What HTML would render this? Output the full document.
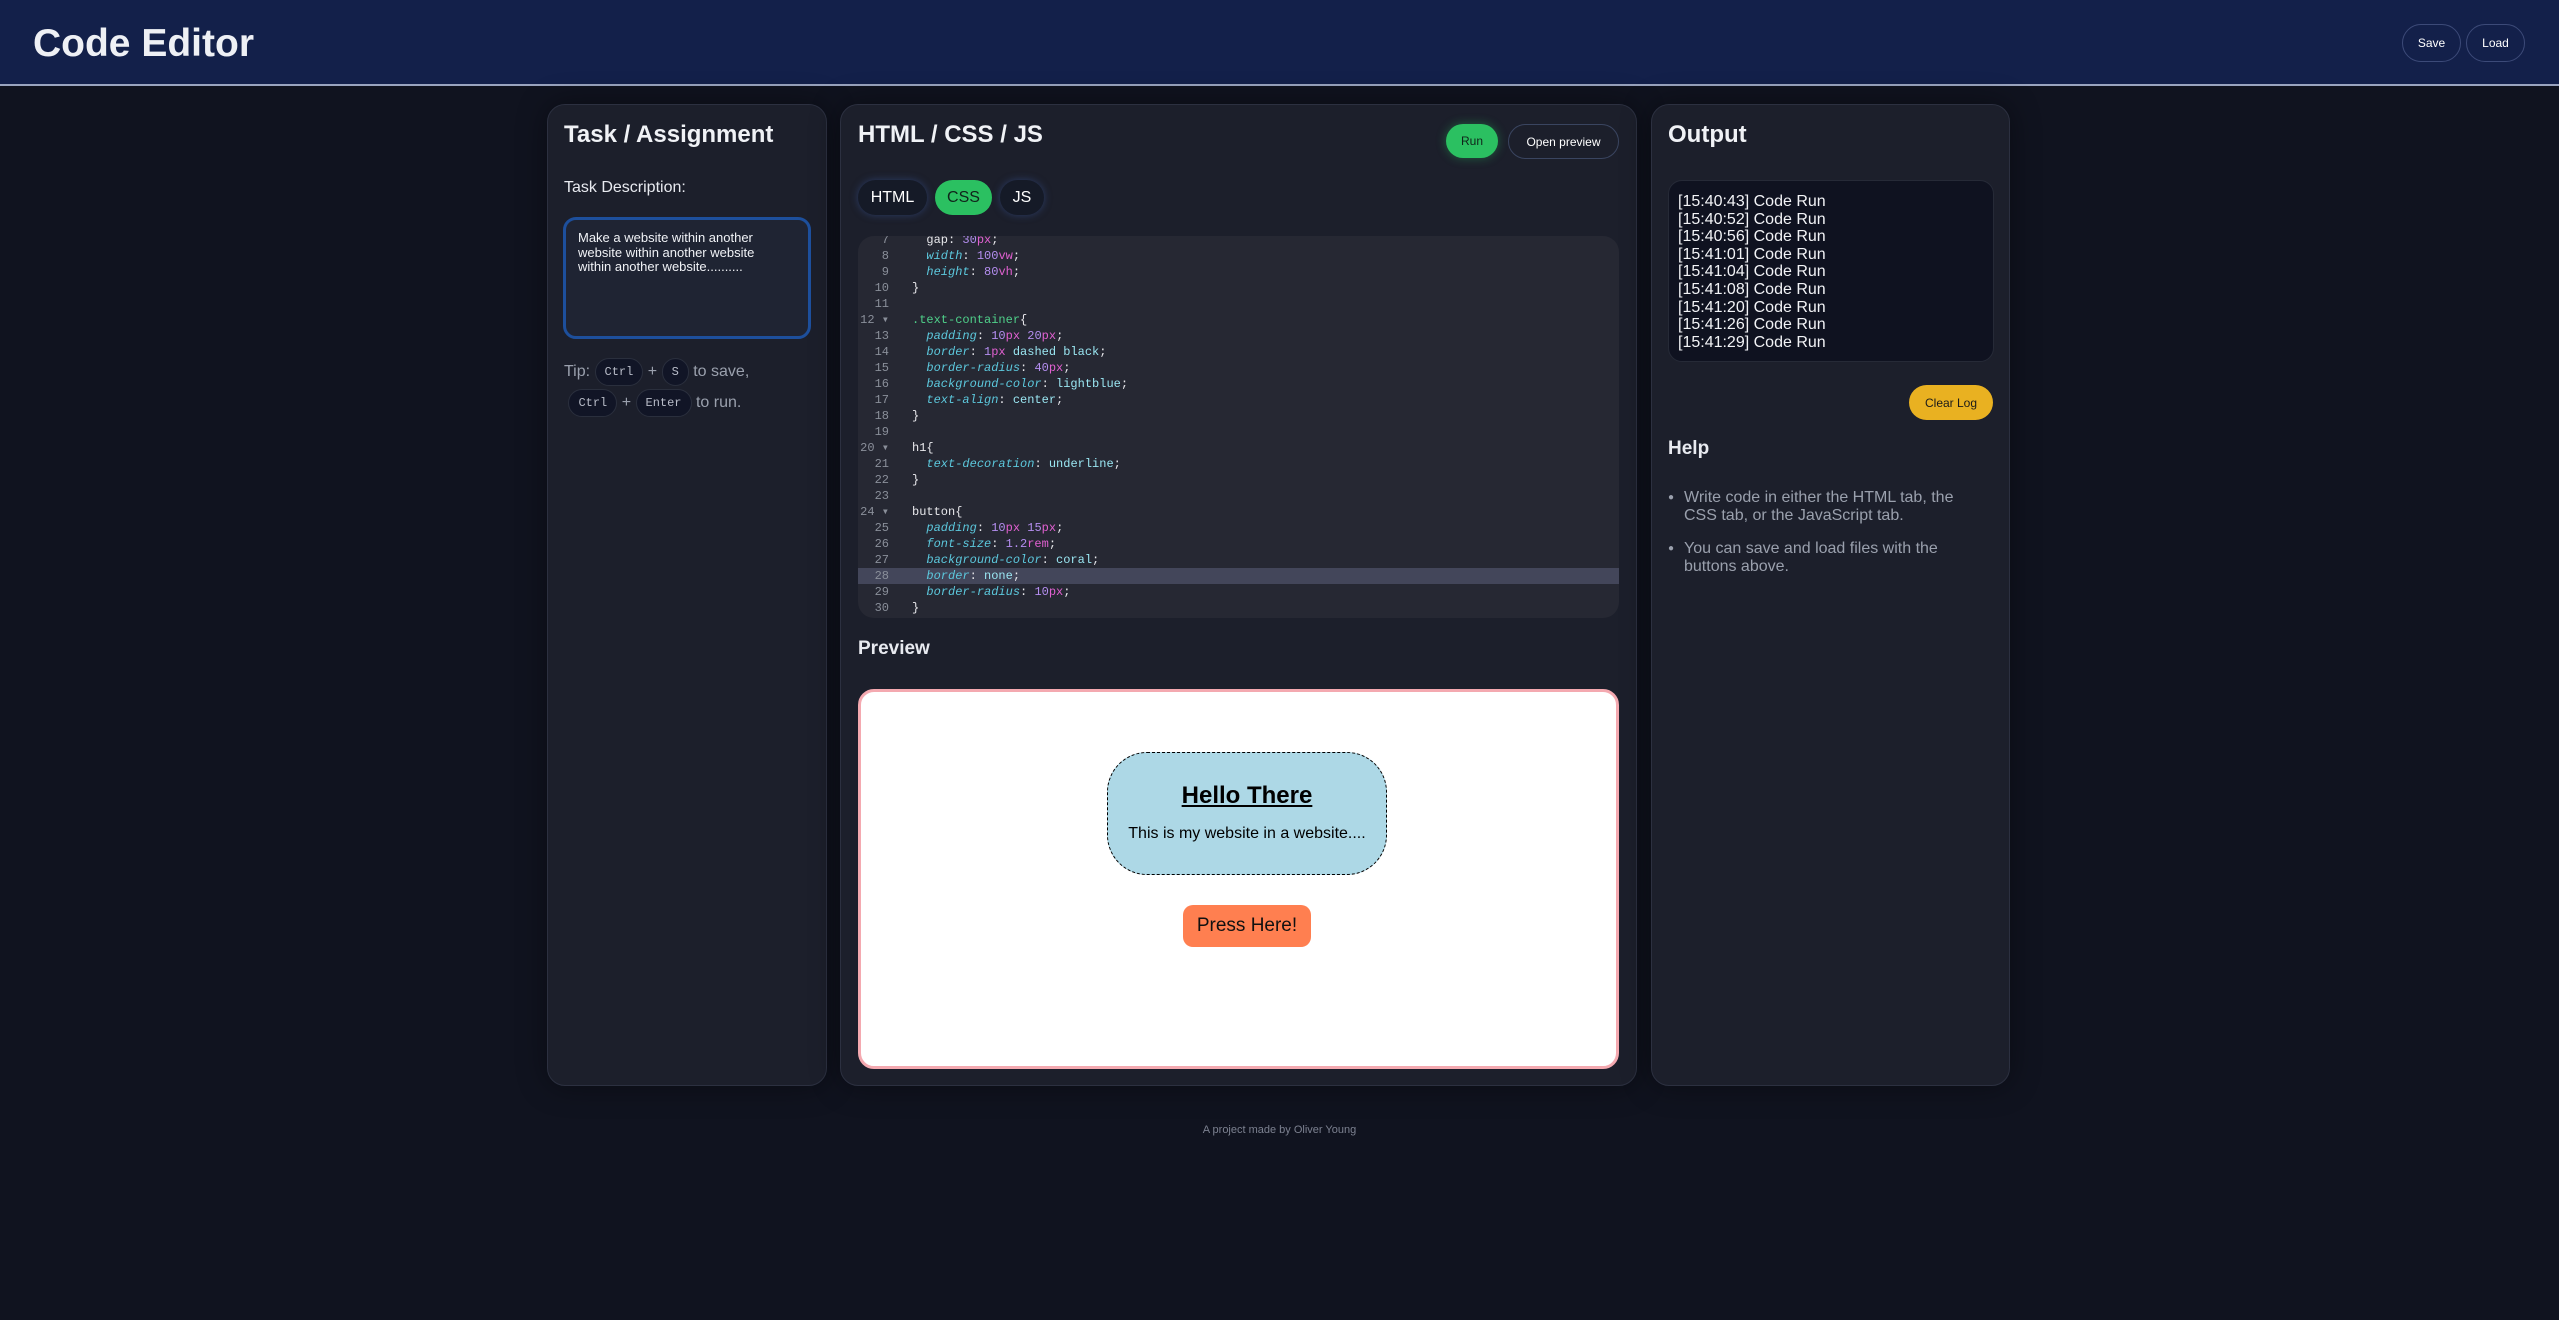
<!DOCTYPE html>
<html><head><meta charset="utf-8">
<style>
*{box-sizing:border-box;margin:0;padding:0}
body{width:2559px;height:1320px;background:#10131f;font-family:"Liberation Sans",sans-serif;color:#e8eaf0;position:relative;overflow:hidden}
.a{position:absolute}
.hdr{left:0;top:0;width:2559px;height:86px;background:#13204a;border-bottom:2px solid #9aa4bf}
.hdr h1{position:absolute;left:33px;top:22px;font-size:39px;font-weight:bold;color:#eef0f5}
.hb{position:absolute;top:24px;height:38px;border:1px solid #3c4a78;border-radius:19px;font-size:12px;color:#fff;display:flex;align-items:center;justify-content:center}
.panel{position:absolute;top:104px;height:982px;background:#1c1f2b;border:1px solid #2c3040;border-radius:18px;box-shadow:0 0 30px rgba(0,0,0,.4)}
.t{position:absolute;font-size:24px;font-weight:bold;color:#f0f2f6}
.pill{position:absolute;border-radius:20px;display:flex;align-items:center;justify-content:center}
.kbd{display:inline-block;background:#111526;border:1px solid #2a2f3d;border-radius:14px;font-family:"Liberation Mono",monospace;font-size:12px;line-height:14px;color:#b8bcc8;padding:6px 9px;vertical-align:middle}
.code{position:absolute;left:858px;top:236px;width:761px;height:382px;background:#262833;border-radius:16px;overflow:hidden;font-family:"Liberation Mono",monospace;font-size:12px}
.ln{position:absolute;left:0;width:761px;height:16px;line-height:16px;color:#e8e8ec;white-space:pre}
.ln .n{position:absolute;right:730px;color:#8a8f9a;text-align:right}
.ln .c{position:absolute;left:54px}
.p{color:#5cc8dd;font-style:italic}.v{color:#b48ef0}.u{color:#e060d0}.s{color:#4fd08a}.k{color:#9ae6f2}
.log{position:absolute;left:1668px;top:180px;width:326px;height:182px;background:#0f1220;border:1px solid #262a37;border-radius:14px;padding:12px 9px;font-size:16px;line-height:17.6px;color:#f2f3f6}
li{margin-bottom:15px}
</style></head><body>
<div class="a hdr"><h1>Code Editor</h1>
<div class="hb" style="left:2402px;width:59px">Save</div>
<div class="hb" style="left:2466px;width:59px">Load</div></div>

<div class="panel" style="left:547px;width:280px"></div>
<div class="panel" style="left:840px;width:797px"></div>
<div class="panel" style="left:1651px;width:359px"></div>

<!-- left -->
<div class="t" style="left:564px;top:121px">Task / Assignment</div>
<div class="a" style="left:564px;top:179px;font-size:16px">Task Description:</div>
<div class="a" style="left:563px;top:217px;width:248px;height:122px;border:3px solid #1d4f9c;border-radius:13px;background:#1f2433;padding:11px 34px 11px 12px;font-size:13px;line-height:14.5px;color:#f0f2f6">Make a website within another website within another website within another website..........</div>
<div class="a" style="left:564px;top:356px;font-size:16px;color:#9aa0ad;line-height:31px;width:250px">Tip: <span class="kbd">Ctrl</span> + <span class="kbd">S</span> to save,<br>&nbsp;<span class="kbd">Ctrl</span> + <span class="kbd">Enter</span> to run.</div>

<!-- middle -->
<div class="t" style="left:858px;top:121px">HTML / CSS / JS</div>
<div class="pill" style="left:1446px;top:124px;width:52px;height:34px;background:#2bc061;color:#10231a;font-size:12px;box-shadow:0 0 10px rgba(43,192,97,.4)">Run</div>
<div class="pill" style="left:1508px;top:124px;width:111px;height:35px;border:1px solid #3a4560;color:#fff;font-size:12px">Open preview</div>
<div class="pill" style="left:858px;top:180px;width:69px;height:35px;background:#151a27;color:#fff;font-size:16px;box-shadow:0 0 8px rgba(60,90,160,.5)">HTML</div>
<div class="pill" style="left:935px;top:180px;width:57px;height:35px;background:#2bc061;color:#10231a;font-size:16px">CSS</div>
<div class="pill" style="left:1000px;top:180px;width:44px;height:35px;background:#151a27;color:#fff;font-size:16px;box-shadow:0 0 8px rgba(60,90,160,.5)">JS</div>

<div class="code">
<div class="ln" style="top:-4px"><span class="n">7</span><span class="c">  gap: <span class="v">30</span><span class="u">px</span>;</span></div>
<div class="ln" style="top:12px"><span class="n">8</span><span class="c">  <span class="p">width</span>: <span class="v">100</span><span class="u">vw</span>;</span></div>
<div class="ln" style="top:28px"><span class="n">9</span><span class="c">  <span class="p">height</span>: <span class="v">80</span><span class="u">vh</span>;</span></div>
<div class="ln" style="top:44px"><span class="n">10</span><span class="c">}</span></div>
<div class="ln" style="top:60px"><span class="n">11</span></div>
<div class="ln" style="top:76px"><span class="n">12 ▾</span><span class="c"><span class="s">.text-container</span>{</span></div>
<div class="ln" style="top:92px"><span class="n">13</span><span class="c">  <span class="p">padding</span>: <span class="v">10</span><span class="u">px</span> <span class="v">20</span><span class="u">px</span>;</span></div>
<div class="ln" style="top:108px"><span class="n">14</span><span class="c">  <span class="p">border</span>: <span class="v">1</span><span class="u">px</span> <span class="k">dashed black</span>;</span></div>
<div class="ln" style="top:124px"><span class="n">15</span><span class="c">  <span class="p">border-radius</span>: <span class="v">40</span><span class="u">px</span>;</span></div>
<div class="ln" style="top:140px"><span class="n">16</span><span class="c">  <span class="p">background-color</span>: <span class="k">lightblue</span>;</span></div>
<div class="ln" style="top:156px"><span class="n">17</span><span class="c">  <span class="p">text-align</span>: <span class="k">center</span>;</span></div>
<div class="ln" style="top:172px"><span class="n">18</span><span class="c">}</span></div>
<div class="ln" style="top:188px"><span class="n">19</span></div>
<div class="ln" style="top:204px"><span class="n">20 ▾</span><span class="c">h1{</span></div>
<div class="ln" style="top:220px"><span class="n">21</span><span class="c">  <span class="p">text-decoration</span>: <span class="k">underline</span>;</span></div>
<div class="ln" style="top:236px"><span class="n">22</span><span class="c">}</span></div>
<div class="ln" style="top:252px"><span class="n">23</span></div>
<div class="ln" style="top:268px"><span class="n">24 ▾</span><span class="c">button{</span></div>
<div class="ln" style="top:284px"><span class="n">25</span><span class="c">  <span class="p">padding</span>: <span class="v">10</span><span class="u">px</span> <span class="v">15</span><span class="u">px</span>;</span></div>
<div class="ln" style="top:300px"><span class="n">26</span><span class="c">  <span class="p">font-size</span>: <span class="v">1.2</span><span class="u">rem</span>;</span></div>
<div class="ln" style="top:316px"><span class="n">27</span><span class="c">  <span class="p">background-color</span>: <span class="k">coral</span>;</span></div>
<div class="ln" style="top:332px;background:#43465a"><span class="n">28</span><span class="c">  <span class="p">border</span>: <span class="k">none</span>;</span></div>
<div class="ln" style="top:348px"><span class="n">29</span><span class="c">  <span class="p">border-radius</span>: <span class="v">10</span><span class="u">px</span>;</span></div>
<div class="ln" style="top:364px"><span class="n">30</span><span class="c">}</span></div>
</div>

<div class="a" style="left:858px;top:638px;font-size:19px;font-weight:bold">Preview</div>
<div class="a" style="left:858px;top:689px;width:761px;height:380px;background:#fff;border:3px solid #f4a9b0;border-radius:16px"></div>
<div class="a" style="left:1107px;top:752px;width:280px;height:123px;background:#add8e6;border:1px dashed #000;border-radius:40px;text-align:center;color:#000">
<div style="margin-top:29px;font-size:24px;font-weight:bold;text-decoration:underline">Hello There</div>
<div style="margin-top:15px;font-size:16px">This is my website in a website....</div></div>
<div class="a" style="left:1183px;top:905px;width:128px;height:42px;background:#ff7f50;border-radius:10px;color:#111;font-size:19px;display:flex;align-items:center;justify-content:center">Press Here!</div>

<!-- right -->
<div class="t" style="left:1668px;top:121px">Output</div>
<div class="log">[15:40:43] Code Run<br>[15:40:52] Code Run<br>[15:40:56] Code Run<br>[15:41:01] Code Run<br>[15:41:04] Code Run<br>[15:41:08] Code Run<br>[15:41:20] Code Run<br>[15:41:26] Code Run<br>[15:41:29] Code Run</div>
<div class="pill" style="left:1909px;top:385px;width:84px;height:35px;background:#e9b121;color:#1a1a1a;font-size:12px;border-radius:18px">Clear Log</div>
<div class="a" style="left:1668px;top:438px;font-size:19px;font-weight:bold">Help</div>
<ul class="a" style="left:1684px;top:489px;width:300px;font-size:16px;line-height:18px;color:#9aa0ad;padding-left:0;list-style:none">
<li style="position:relative"><span style="position:absolute;left:-16px;font-size:10px">●</span>Write code in either the HTML tab, the CSS tab, or the JavaScript tab.</li>
<li style="position:relative"><span style="position:absolute;left:-16px;font-size:10px">●</span>You can save and load files with the buttons above.</li>
</ul>

<div class="a" style="left:0;width:2559px;top:1124px;text-align:center;font-size:11px;color:#7c8190">A project made by Oliver Young</div>
</body></html>
